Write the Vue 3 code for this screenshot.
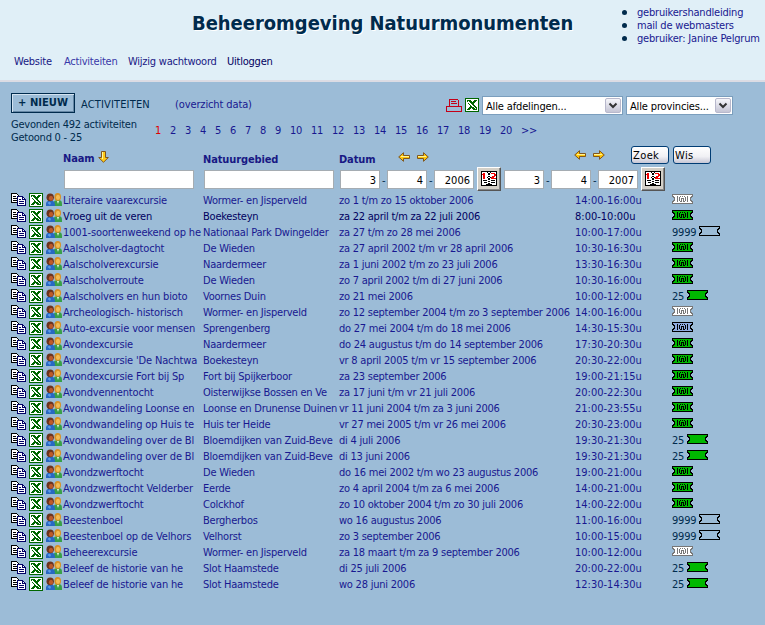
<script setup>
const nav = ['Website', 'Activiteiten', 'Wijzig wachtwoord', 'Uitloggen']
const pages = Array.from({ length: 20 }, (_, i) => i + 1)
const rows = [
  ['Literaire vaarexcursie', 'Wormer- en Jisperveld', 'zo 1 t/m zo 15 oktober 2006', '14:00-16:00u', 'white'],
  ['Vroeg uit de veren', 'Boekesteyn', 'za 22 april t/m za 22 juli 2006', '8:00-10:00u', 'green'],
  ['1001-soortenweekend op he', 'Nationaal Park Dwingelder', 'za 27 t/m zo 28 mei 2006', '10:00-17:00u', 'blank', '9999'],
  ['Aalscholver-dagtocht', 'De Wieden', 'za 27 april 2002 t/m vr 28 april 2006', '10:30-16:30u', 'green'],
  ['Aalscholverexcursie', 'Naardermeer', 'za 1 juni 2002 t/m zo 23 juli 2006', '13:30-16:30u', 'green'],
  ['Aalscholverroute', 'De Wieden', 'zo 7 april 2002 t/m di 27 juni 2006', '10:30-16:00u', 'green'],
  ['Aalscholvers en hun bioto', 'Voornes Duin', 'zo 21 mei 2006', '10:00-12:00u', 'full', '25'],
  ['Archeologisch- historisch', 'Wormer- en Jisperveld', 'zo 12 september 2004 t/m zo 3 september 2006', '14:00-16:00u', 'white'],
  ['Auto-excursie voor mensen', 'Sprengenberg', 'do 27 mei 2004 t/m do 18 mei 2006', '14:30-15:30u', 'blue'],
  ['Avondexcursie', 'Naardermeer', 'do 24 augustus t/m do 14 september 2006', '17:30-20:30u', 'green'],
  ["Avondexcursie 'De Nachtwa", 'Boekesteyn', 'vr 8 april 2005 t/m vr 15 september 2006', '20:30-22:00u', 'green'],
  ['Avondexcursie Fort bij Sp', 'Fort bij Spijkerboor', 'za 23 september 2006', '19:00-21:15u', 'green'],
  ['Avondvennentocht', 'Oisterwijkse Bossen en Ve', 'za 17 juni t/m vr 21 juli 2006', '20:00-22:30u', 'green'],
  ['Avondwandeling Loonse en', 'Loonse en Drunense Duinen', 'vr 11 juni 2004 t/m za 3 juni 2006', '21:00-23:55u', 'green'],
  ['Avondwandeling op Huis te', 'Huis ter Heide', 'vr 27 mei 2005 t/m vr 26 mei 2006', '20:30-23:00u', 'green'],
  ['Avondwandeling over de Bl', 'Bloemdijken van Zuid-Beve', 'di 4 juli 2006', '19:30-21:30u', 'full', '25'],
  ['Avondwandeling over de Bl', 'Bloemdijken van Zuid-Beve', 'di 13 juni 2006', '19:30-21:30u', 'full', '25'],
  ['Avondzwerftocht', 'De Wieden', 'do 16 mei 2002 t/m wo 23 augustus 2006', '19:00-21:00u', 'green'],
  ['Avondzwerftocht Velderber', 'Eerde', 'zo 4 april 2004 t/m za 6 mei 2006', '14:00-21:00u', 'green'],
  ['Avondzwerftocht', 'Colckhof', 'zo 10 oktober 2004 t/m zo 30 juli 2006', '14:00-22:00u', 'green'],
  ['Beestenboel', 'Bergherbos', 'wo 16 augustus 2006', '11:00-16:00u', 'blank', '9999'],
  ['Beestenboel op de Velhors', 'Velhorst', 'zo 3 september 2006', '10:00-15:00u', 'blank', '9999'],
  ['Beheerexcursie', 'Wormer- en Jisperveld', 'za 18 maart t/m za 9 september 2006', '10:00-12:00u', 'white'],
  ['Beleef de historie van he', 'Slot Haamstede', 'di 25 juli 2006', '20:00-22:00u', 'full', '25'],
  ['Beleef de historie van he', 'Slot Haamstede', 'wo 28 juni 2006', '12:30-14:30u', 'full', '25'],
]
</script>

<template>
  <svg class="defs" width="0" height="0">
    <symbol id="excel" viewBox="0 0 14 14">
      <path fill="#006600" d="M0 0h14v14H0z" />
      <path fill="#fff" d="M1 1h12v12H1z" />
      <path fill="#006600" d="M2 2h4v1h1v1h1V3h1V2h3v1h-1v1h-1v1H9v2h1v1h1v1h1v3H8v-1H7v-1H6v1H5v1H2v-1h1v-1h1V9h1V7H4V6H3V4H2z" />
      <path fill="#fff" d="M3 3h1v1h1v1h1v1h1v1h1v1h1v1h1v1h1v1h-1v-1H9v-1H8V9H7V8H6V7H5V6H4V5H3z" />
    </symbol>
    <symbol id="copy" viewBox="0 0 15 13">
      <path fill="#fff" stroke="#000" d="M.5.5h5l3 3v6h-8z" />
      <path stroke="#000" d="M2 3.500h3M2 5.500h4M2 7.500h4" />
      <path fill="#fff" stroke="#000066" d="M6.500 3.500h5l3 3v6h-8z" />
      <path fill="none" stroke="#000066" d="M11.500 3.500v3h3M8 6.500h2M8 8.500h5M8 10.500h5" />
    </symbol>
    <symbol id="people" viewBox="0 0 16 13">
      <path fill="#38a048" d="M8 13c-1-4 0-6 4-6s4 2 4 6z" />
      <ellipse cx="11.700" cy="3.900" rx="3.300" ry="3.900" fill="#d99022" />
      <ellipse cx="12" cy="4.300" rx="2" ry="2.600" fill="#f3bd55" />
      <path fill="#e8f4e8" d="M11 8h2l-1 3z" />
      <path fill="#2868c4" d="M0 13c-.5-4 1-5.500 4.500-5.500S9 9 9 13z" />
      <path fill="#5c9be6" d="M1.500 10l2-1.500L5 10l-1 2z" />
      <ellipse cx="4.200" cy="4.300" rx="3.700" ry="3.900" fill="#6b3420" />
      <ellipse cx="5" cy="5.300" rx="2.100" ry="2.500" fill="#bd5a2c" />
    </symbol>
    <symbol id="ticket" viewBox="0 0 21 10">
      <path stroke="currentColor" d="M.5.5h20v2h-1v1h-1v3h1v1h1v2H.5v-2h1v-1h1v-3h-1v-1h-1z" />
    </symbol>
    <symbol id="info" viewBox="0 0 21 10">
      <use href="#ticket" />
      <path fill="currentColor" d="M5 2h1v6H5zM15 2h1v6h-1zM8 2h1v1H8zM12 2h1v1h-1zM7 3h1v4H7zM13 3h1v4h-1zM8 7h1v1H8zM12 7h1v1h-1zM10 2h1v1h-1zM9 4h3v1H9zM9 5h1v3H9zM11 5h1v3h-1z" />
    </symbol>
    <symbol id="arrow" viewBox="0 0 12 10">
      <path class="soft" fill="#ffc60a" stroke="#80561c" d="M.7 5l4.800-4.300v2.800h6v3h-6v2.800z" />
      <path stroke="#fff39a" d="M3 4.500h8" />
    </symbol>
    <symbol id="calendar" viewBox="0 0 16 16">
      <path fill="#fff" stroke="#000" d="M.5.500h15v14H.5z" />
      <path fill="#f00000" d="M1 3h1V2h2v6H2V4H1zM10 2h4v1h1v2h-1v1h-1v1h2v1h-5V6h1V5h2V3h-3z" />
      <path fill="#000" d="M6 1h1v1H6zM9 1h1v1H9zM7 2h2v2H7zM7 5h2v1H7zM6 6h1v1H6zM9 6h1v1H9zM7 7h2v2H7zM7 10h2v1H7zM7 12h2v2H7zM2 9h4v1H2zM10 9h4v1h-4zM3 11h3v1H3zM10 11h4v1h-4zM5 13h2v1H5zM9 13h2v1H9z" />
    </symbol>
  </svg>
  <div class="page">
    <header>
      <div class="brand">
        <h1>Beheeromgeving Natuurmonumenten</h1>
        <nav><a v-for="(n, i) in nav" :key="n" :class="'nav' + i">{{ n }}</a></nav>
      </div>
      <ul>
        <li>gebruikershandleiding</li>
        <li>mail de webmasters</li>
        <li>gebruiker: Janine Pelgrum</li>
      </ul>
    </header>
    <section class="toolbar">
      <button class="new">+ NIEUW</button>
      <span class="caption">ACTIVITEITEN</span>
      <a class="overview">(overzicht data)</a>
      <svg class="printer" width="16" height="14" viewBox="0 0 16 14"><path fill="none" stroke="#c40018" d="M3.500 7V.5h8l1 1V7M.5 7.500h15v5H.5zM5 2.500h5M5 4.500h6" /></svg>
      <svg class="xls" width="14" height="14"><use href="#excel" /></svg>
      <div class="select departments"><span>Alle afdelingen...</span><i><svg width="10" height="7"><path d="M1.500 1.500L5 5l3.500-3.500" /></svg></i></div>
      <div class="select provinces"><span>Alle provincies...</span><i><svg width="10" height="7"><path d="M1.500 1.500L5 5l3.500-3.500" /></svg></i></div>
    </section>
    <section class="results">
      <p>Gevonden 492 activiteiten<br>Getoond 0 - 25</p>
      <div class="pages">
        <a v-for="p in pages" :key="p" :class="{ wide: p > 9, current: p === 1 }">{{ p }}</a><a class="next">&gt;&gt;</a>
      </div>
    </section>
    <section class="headings">
      <b class="sorted">Naam <svg width="11" height="12" viewBox="0 0 11 12"><path class="soft" fill="#ffcb18" stroke="#80561c" d="M3.500.5h4v6h2.800L5.500 11.300.7 6.500h2.800z" /><path stroke="#fff6a0" d="M4.500 1v7" /></svg></b>
      <b>Natuurgebied</b>
      <b>Datum</b>
      <span class="arrows"><svg width="12" height="10"><use href="#arrow" /></svg><svg class="flip" width="12" height="10"><use href="#arrow" /></svg></span>
      <span class="arrows second"><svg width="12" height="10"><use href="#arrow" /></svg><svg class="flip" width="12" height="10"><use href="#arrow" /></svg></span>
      <button>Zoek</button><button>Wis</button>
    </section>
    <section class="filters">
      <div class="field"></div><div class="field last"></div>
      <div v-for="year in [2006, 2007]" :key="year" class="date">
        <div class="field">3</div><s>-</s><div class="field">4</div><s>-</s><div class="field">{{ year }}</div>
        <button class="cal"><svg width="16" height="16"><use href="#calendar" /></svg></button>
      </div>
    </section>
    <main>
      <div v-for="(r, i) in rows" :key="i" class="row" :class="{ active: i === 1 }">
        <svg width="15" height="13"><use href="#copy" /></svg>
        <svg width="14" height="14"><use href="#excel" /></svg>
        <svg class="soft" width="16" height="13"><use href="#people" /></svg>
        <span class="name">{{ r[0] }}</span><span class="area">{{ r[1] }}</span><span class="when">{{ r[2] }}</span><span class="time">{{ r[3] }}</span>
        <span class="status"><em v-if="r[5]">{{ r[5] }}</em><svg class="ticket" :class="r[4]" width="21" height="10"><use :href="r[5] ? '#ticket' : '#info'" /></svg></span>
      </div>
    </main>
  </div>
</template>

<style>
body { margin: 0; background: #9cbcd7; }
</style>

<style scoped>
* { box-sizing: border-box; }
.defs { position: absolute; }
.page { width: 765px; height: 625px; overflow: hidden; background: #9cbcd7; color: #002b4d; font: 11px/13px "DejaVu Sans Condensed", "DejaVu Sans", sans-serif; font-stretch: condensed; letter-spacing: -.23px; white-space: nowrap; }
svg { display: block; shape-rendering: crispEdges; }
.soft { shape-rendering: auto; }
header { display: flex; height: 82px; background: #e0eff7; border-bottom: 2px solid #dcdce4; }
.brand { width: 624px; }
h1 { margin: 0; padding: 10px 0 0 192px; font-size: 20px; line-height: 26px; letter-spacing: -.04px; text-shadow: 1px 1px #fff; }
nav { display: flex; padding: 19px 0 0 14px; color: #181884; }
.nav0 { width: 50px; }
.nav1 { width: 64px; color: #3838a8; }
.nav2 { width: 99px; }
.nav3 { color: #000060; }
ul { margin: 0; padding: 6px 0 0 13px; list-style: none; color: #181890; }
li { position: relative; letter-spacing: -.2px; }
li::before { content: ""; position: absolute; left: -15px; top: 4px; width: 5px; height: 5px; border-radius: 50%; background: #002b4d; }
button { padding: 0; font: inherit; letter-spacing: inherit; }
.toolbar { display: flex; height: 36px; padding: 11px 0 0 11px; }
.toolbar > * { flex: none; }
.new { width: 64px; height: 20px; border: 1px solid #002b4d; background: #9cbcd7; box-shadow: inset 1px 1px #d4e3f1, inset -1px -1px #6587a5; color: #002b4d; font: bold 10px/14px "DejaVu Sans", sans-serif; letter-spacing: 0; }
.caption { width: 100px; padding: 5px 0 0 6px; letter-spacing: .15px; }
.overview { width: 271px; padding-top: 5px; color: #181890; letter-spacing: -.12px; }
.printer { margin: 6px 3px 0 0; }
.xls { margin: 5px 3px 0 0; }
.select { display: flex; justify-content: space-between; height: 19px; margin-top: 3px; padding: 1px; border: 1px solid #7b9ebd; background: #fff; color: #000; letter-spacing: -.15px; }
.select span { padding: 2px 0 0 2px; }
.select i { display: grid; place-items: center; width: 16px; border: 1px solid #b8b8cc; border-radius: 2px; background: linear-gradient(#f6f6fa, #c5c5d5); }
.select path { fill: none; stroke: #333; stroke-width: 2; shape-rendering: auto; }
.departments { width: 141px; margin-right: 3px; }
.provinces { width: 107px; }
.results { display: flex; height: 28px; }
p { width: 155px; margin: 0; padding: 0 0 0 11px; }
.pages { display: flex; padding-top: 6px; color: #181890; }
.pages a { width: 15px; }
.pages .wide { width: 21px; }
.pages .current { color: #e00000; }
.headings { display: grid; grid-template-columns: 140px 136px 59px 176px 57px 42px 38px; height: 20px; padding-left: 63px; color: #181884; }
.headings b { padding-top: 7px; letter-spacing: -.12px; }
.headings .sorted { display: flex; gap: 4px; padding-top: 6px; }
.headings .sorted svg { margin-top: -1px; }
.arrows { display: flex; gap: 7px; padding-top: 6px; }
.second { padding-top: 4px; }
.flip { transform: scaleX(-1); }
.headings button { width: 38px; height: 18px; border: 1px solid #003c74; border-radius: 3px; background: linear-gradient(#fff, #f0f0f4 60%, #c6c6d5); color: #000; text-align: left; padding-left: 1px; letter-spacing: .4px; }
.filters { display: flex; height: 25px; padding-left: 64px; }
.field { width: 130px; height: 19px; margin: 4px 10px 0 0; border: 1px solid #a5acb2; background: #fff; color: #000; }
.last { margin-right: 6px; }
.date { display: flex; width: 164px; }
.date .field { width: 40px; margin-right: 0; padding: 3px 3px 0 0; text-align: right; letter-spacing: 0; }
s { width: 7px; padding: 8px 0 0 2px; text-decoration: none; }
.cal { display: grid; place-items: center; width: 24px; height: 24px; margin: 1px 0 0 3px; border: 1px solid; border-color: #fff #555 #555 #fff; background: #d4d0c8; box-shadow: inset -1px -1px #888; }
.row { display: grid; grid-template-columns: 18px 17px 17px 140px 136px 236px 97px 80px; height: 16px; padding: 0 0 0 11px; color: #181890; }
main { padding-top: 1px; }
.row > svg { margin-top: 1px; }
.row > span { padding-top: 2px; }
.row.active { color: #000060; }
.row .time { letter-spacing: 0; }
.row .name { letter-spacing: -.15px; }
.row .status { display: flex; gap: 4px; padding-top: 2px; color: #002b4d; }
em { font-style: normal; }
.ticket { color: #000; fill: #9cbcd7; }
.status em + .ticket { margin-left: -1px; }
.ticket.green, .ticket.full { fill: #00b800; }
.ticket.blue { fill: #8fabe0; }
.ticket.white { color: #777; fill: #fff; }
</style>
